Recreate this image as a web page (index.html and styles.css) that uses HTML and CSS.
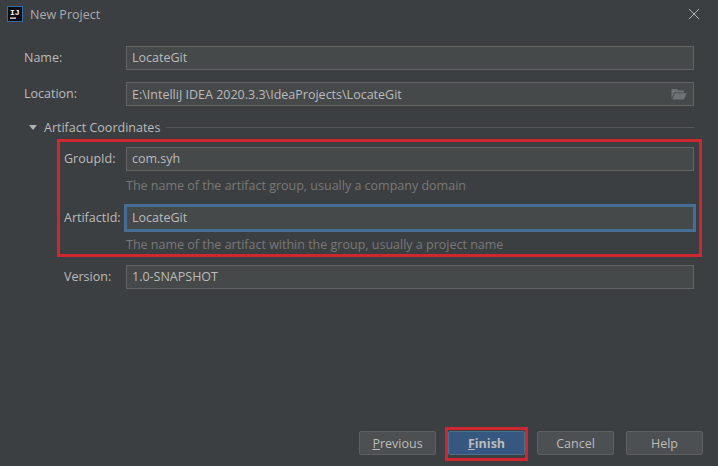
FILE: index.html
```html
<!DOCTYPE html>
<html lang="en">
<head>
<meta charset="utf-8">
<title>New Project</title>
<link rel="stylesheet" href="styles.css">
</head>
<body>
<div class="dialog">
  <header class="titlebar">
    <svg class="app-icon" width="16" height="16" viewBox="0 0 16 16">
      <rect x="0.5" y="0.5" width="15" height="15" fill="#0b0d14" stroke="#2f6ea8"/>
      <text x="3" y="9" class="app-icon-text">IJ</text>
      <rect x="3" y="11.5" width="6" height="1.2" fill="#fff"/>
    </svg>
    <span class="title">New Project</span>
    <svg class="close" width="12" height="12" viewBox="0 0 12 12">
      <path d="M1 1L11 11M11 1L1 11" stroke="#b4b6b7" stroke-width="1" fill="none"/>
    </svg>
  </header>

  <main class="form">
    <div class="row">
      <label class="label">Name:</label>
      <div class="input">LocateGit</div>
    </div>
    <div class="row row-location">
      <label class="label">Location:</label>
      <div class="input input-path">
        <span>E:\IntelliJ IDEA 2020.3.3\IdeaProjects\LocateGit</span>
        <svg class="folder" width="16" height="13" viewBox="0 0 16 13">
          <path d="M0.5 1H5.5L7 2.6H13V4.4H3.4L0.5 10.5Z" fill="#6e7274"/>
          <path d="M3.9 5.2H15.5L13 11.5H1.2Z" fill="#6e7274"/>
        </svg>
      </div>
    </div>

    <div class="section">
      <span class="triangle"></span>
      <span class="section-title">Artifact Coordinates</span>
      <span class="rule"></span>
    </div>

    <div class="group">
      <div class="row row-indent">
        <label class="label">GroupId:</label>
        <div class="input">com.syh</div>
      </div>
      <p class="hint">The name of the artifact group, usually a company domain</p>
      <div class="row row-indent">
        <label class="label">ArtifactId:</label>
        <div class="input input-focus">LocateGit</div>
      </div>
      <p class="hint">The name of the artifact within the group, usually a project name</p>
      <div class="row row-indent">
        <label class="label">Version:</label>
        <div class="input">1.0-SNAPSHOT</div>
      </div>
    </div>
  </main>

  <footer class="buttons">
    <button class="btn"><u>P</u>revious</button>
    <button class="btn btn-primary"><u>F</u>inish</button>
    <button class="btn">Cancel</button>
    <button class="btn">Help</button>
  </footer>

  <div class="mark mark-fields"></div>
  <div class="mark mark-finish"></div>
</div>
</body>
</html>
```

FILE: styles.css
```css
* { box-sizing: border-box; }
html, body { margin: 0; height: 100%; }
body {
  background: #3c3f41;
  color: #bbbbbb;
  font-family: "Open Sans", "Noto Sans", sans-serif;
  font-size: 12.5px;
  overflow: hidden;
}
.dialog {
  position: relative;
  width: 718px;
  height: 466px;
  display: flex;
  flex-direction: column;
}
.titlebar {
  display: flex;
  align-items: center;
  height: 28px;
  padding: 0 18px 0 7px;
  flex: none;
}
.app-icon { flex: none; }
.app-icon-text {
  font-family: "Liberation Mono", monospace;
  font-size: 8px;
  font-weight: 700;
  fill: #fff;
}
.title { margin-left: 7px; color: #a9abad; }
.close { margin-left: auto; }
.form {
  flex: 1;
  padding: 18px 24px 0 24px;
}
.row { display: flex; align-items: center; }
.row-location { margin-top: 12px; }
.row-indent { padding-left: 40px; }
.row-indent .label { width: 62px; }
.label { width: 102px; flex: none; line-height: 22px; }
.input {
  flex: 1;
  height: 24px;
  line-height: 21px;
  padding: 0 5px;
  background: #45494a;
  border: 1px solid #646464;
  color: #bbbbbb;
  white-space: nowrap;
}
.input-path {
  display: flex;
  justify-content: space-between;
  align-items: center;
  padding-right: 6px;
}
.folder { flex: none; }
.input-focus {
  outline: 2px solid #466d94;
  border-color: #466d94;
}
.section {
  display: flex;
  align-items: center;
  height: 18px;
  margin-top: 12px;
  padding-left: 5px;
}
.section-title { margin-left: 7px; }
.triangle {
  width: 0;
  height: 0;
  border-left: 4px solid transparent;
  border-right: 4px solid transparent;
  border-top: 5px solid #b0b2b3;
}
.rule {
  flex: 1;
  height: 1px;
  margin-left: 6px;
  background: #555555;
}
.group { margin-top: 11px; }
.hint {
  margin: 0;
  padding-left: 102px;
  height: 35px;
  line-height: 30px;
  color: #787878;
}
.buttons {
  display: flex;
  flex: none;
  padding: 0 15px 11px 359px;
  gap: 12px;
}
.btn {
  width: 77px;
  height: 24px;
  padding: 0;
  background: #4c5052;
  border: 1px solid #5e6060;
  border-radius: 2px;
  color: #bbbbbb;
  font: inherit;
}
.btn-primary {
  background: #365880;
  border-color: #4c708c;
  font-weight: 700;
}
.mark {
  position: absolute;
  border: 3px solid #cf2630;
  pointer-events: none;
}
.mark-fields { left: 57px; top: 139px; width: 645px; height: 118px; }
.mark-finish { left: 445px; top: 427px; width: 83px; height: 34px; }
```
